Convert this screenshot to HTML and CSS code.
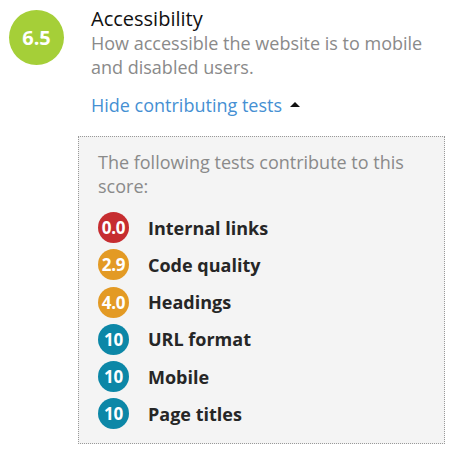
FILE: index.html
```html
<!DOCTYPE html>
<html>
<head>
<meta charset="utf-8">
<link rel="stylesheet" href="styles.css">
</head>
<body>
<div class="page">
  <div class="head">
    <div class="score">6.5</div>
    <div class="info">
      <h2 class="title">Accessibility</h2>
      <p class="desc">How accessible the website is to mobile and disabled users.</p>
      <a class="toggle" href="#">Hide contributing tests<span class="caret"></span></a>
    </div>
  </div>
  <div class="tests">
    <p class="intro">The following tests contribute to this score:</p>
    <ul class="list">
      <li class="item"><span class="badge red">0.0</span><span class="name">Internal links</span></li>
      <li class="item"><span class="badge orange">2.9</span><span class="name">Code quality</span></li>
      <li class="item"><span class="badge orange">4.0</span><span class="name">Headings</span></li>
      <li class="item"><span class="badge blue">10</span><span class="name">URL format</span></li>
      <li class="item"><span class="badge blue">10</span><span class="name">Mobile</span></li>
      <li class="item"><span class="badge blue">10</span><span class="name">Page titles</span></li>
    </ul>
  </div>
</div>
</body>
</html>
```
FILE: styles.css
```css
* { box-sizing: border-box; }
body {
  margin: 0;
  background: #fff;
  font-family: "Open Sans", "Noto Sans", sans-serif;
}
.page {
  padding: 6px 0 0 9px;
}
.head {
  display: flex;
  gap: 27px;
}
.score {
  width: 55px;
  height: 55px;
  margin-top: 4px;
  flex: none;
  border-radius: 50%;
  background: #a5cf38;
  color: #fff;
  font-weight: 700;
  font-size: 20px;
  display: flex;
  align-items: center;
  justify-content: center;
}
.title {
  margin: 0;
  font-size: 20px;
  font-weight: 400;
  line-height: 25px;
  color: #111;
}
.desc {
  margin: 0;
  font-size: 18px;
  line-height: 24px;
  color: #8a8a8a;
}
.toggle {
  display: inline-block;
  margin-top: 14px;
  font-size: 18px;
  line-height: 24px;
  color: #4590d3;
  text-decoration: none;
}
.caret {
  display: inline-block;
  width: 0;
  height: 0;
  margin-left: 8px;
  vertical-align: 5px;
  border-left: 5px solid transparent;
  border-right: 5px solid transparent;
  border-bottom: 5px solid #111;
}
.tests {
  margin: 19px 0 0 69px;
  width: 367px;
  background: #f4f4f4;
  border: 1px dotted #999;
  padding: 13px 19px 14px 19px;
}
.intro {
  margin: 0 0 14px 0;
  font-size: 18px;
  line-height: 24px;
  color: #8a8a8a;
}
.list {
  list-style: none;
  margin: 0;
  padding: 0;
  display: flex;
  flex-direction: column;
  gap: 6.3px;
}
.item {
  display: flex;
  align-items: center;
  gap: 19px;
  height: 31px;
}
.badge {
  width: 31px;
  height: 31px;
  flex: none;
  border-radius: 50%;
  color: #fff;
  font-weight: 700;
  font-size: 17px;
  letter-spacing: -0.3px;
  display: flex;
  align-items: center;
  justify-content: center;
}
.red { background: #c62d30; }
.orange { background: #e39a24; }
.blue { background: #0c87a7; }
.name {
  font-size: 18px;
  font-weight: 700;
  color: #262626;
}
```
